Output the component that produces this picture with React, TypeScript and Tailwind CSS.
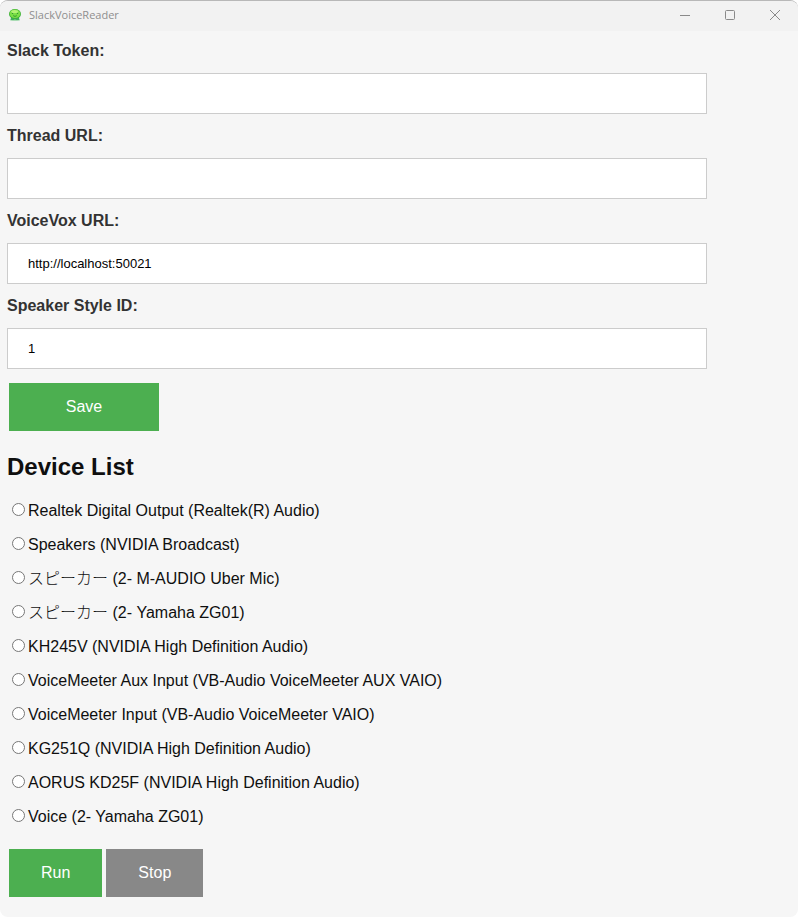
import { useState } from "react";

type Field = {
  id: string;
  label: string;
  initial: string;
};

const fields: Field[] = [
  { id: "slack-token", label: "Slack Token:", initial: "" },
  { id: "thread-url", label: "Thread URL:", initial: "" },
  { id: "voicevox-url", label: "VoiceVox URL:", initial: "http://localhost:50021" },
  { id: "speaker-style-id", label: "Speaker Style ID:", initial: "1" },
];

const devices = [
  "Realtek Digital Output (Realtek(R) Audio)",
  "Speakers (NVIDIA Broadcast)",
  "スピーカー (2- M-AUDIO Uber Mic)",
  "スピーカー (2- Yamaha ZG01)",
  "KH245V (NVIDIA High Definition Audio)",
  "VoiceMeeter Aux Input (VB-Audio VoiceMeeter AUX VAIO)",
  "VoiceMeeter Input (VB-Audio VoiceMeeter VAIO)",
  "KG251Q (NVIDIA High Definition Audio)",
  "AORUS KD25F (NVIDIA High Definition Audio)",
  "Voice (2- Yamaha ZG01)",
];

function AppIcon() {
  return (
    <svg width="12" height="12" viewBox="0 0 12 12" aria-hidden="true">
      <ellipse cx="6" cy="11" rx="5" ry="1" fill="#a9dcb4" />
      <path d="M2 8h8l.4 3H7.6L6 10.4l-1.6.6H1.6z" fill="#3fae5c" />
      <ellipse cx="6" cy="5" rx="6" ry="4.9" fill="#3fb03a" />
      <ellipse cx="6" cy="4.8" rx="5.3" ry="4.2" fill="#7be045" />
      <ellipse cx="5.6" cy="2.4" rx="3.4" ry="1.5" fill="#b4f276" />
      <path
        d="M2.8 4.2l1.4.6M9.2 4.2l-1.4.6M4.2 6.6c1 .9 2.6.9 3.6 0"
        fill="none"
        stroke="#2c8a34"
        strokeWidth="0.9"
      />
    </svg>
  );
}

function TitleBar() {
  return (
    <header className="flex h-[30px] items-center justify-between bg-[#f2f2f2] pb-[2px] pl-[9px]">
      <div className="flex items-center gap-2">
        <AppIcon />
        <span className="font-['Open_Sans',sans-serif] text-[11px] text-[#8f8f8f]">
          SlackVoiceReader
        </span>
      </div>
      <div className="flex h-full text-[#8a8a8a]">
        <button type="button" aria-label="Minimize" className="flex w-[45px] items-center justify-center">
          <svg width="10" height="10" viewBox="0 0 10 10" fill="none" stroke="currentColor">
            <path d="M0 5.5h10" />
          </svg>
        </button>
        <button type="button" aria-label="Maximize" className="flex w-[45px] items-center justify-center">
          <svg width="10" height="10" viewBox="0 0 10 10" fill="none" stroke="currentColor">
            <rect x="0.5" y="0.5" width="9" height="9" rx="1" />
          </svg>
        </button>
        <button type="button" aria-label="Close" className="flex w-[46px] items-center justify-center">
          <svg width="10" height="10" viewBox="0 0 10 10" fill="none" stroke="currentColor">
            <path d="M0 0l10 10M10 0L0 10" />
          </svg>
        </button>
      </div>
    </header>
  );
}

export default function App() {
  const [values, setValues] = useState<Record<string, string>>(() =>
    Object.fromEntries(fields.map((f) => [f.id, f.initial])),
  );
  const [device, setDevice] = useState<string | null>(null);

  return (
    <div className="min-h-screen bg-white font-['Liberation_Sans','Noto_Sans_CJK_JP',sans-serif] text-base text-[#0f0f0f]">
      <div className="min-h-screen overflow-hidden rounded-lg border-t border-[#b8b8b8] bg-[#f6f6f6]">
        <TitleBar />

        <main className="px-[7px] pt-2 pb-5">
          <form onSubmit={(e) => e.preventDefault()}>
            {fields.map((f) => (
              <div key={f.id} className="mb-[10px]">
                <label htmlFor={f.id} className="block font-bold text-[#333333]">
                  {f.label}
                </label>
                <input
                  id={f.id}
                  type="text"
                  value={values[f.id]}
                  onChange={(e) => setValues({ ...values, [f.id]: e.target.value })}
                  className="mt-[10px] block h-[41px] w-full max-w-[700px] border border-[#cccccc] bg-white px-5 text-[13px] text-black outline-none"
                />
              </div>
            ))}
            <button
              type="submit"
              className="mx-[2px] mt-1 h-12 w-[150px] bg-[#4caf50] text-white"
            >
              Save
            </button>
          </form>

          <h2 className="mt-5 text-2xl font-bold">Device List</h2>

          <div role="radiogroup" aria-label="Device List" className="mt-[11px]">
            {devices.map((name) => (
              <label key={name} className="flex h-[34px] items-center gap-[3px] pl-[5px] font-light">
                <input
                  type="radio"
                  name="device"
                  className="mb-1 size-[13px] shrink-0"
                  checked={device === name}
                  onChange={() => setDevice(name)}
                />
                {name}
              </label>
            ))}
          </div>

          <div className="mt-[15px] flex gap-1 px-[2px]">
            <button type="button" className="h-12 bg-[#4caf50] px-8 text-white">
              Run
            </button>
            <button type="button" className="h-12 bg-[#888888] px-8 text-white">
              Stop
            </button>
          </div>
        </main>
      </div>
    </div>
  );
}
